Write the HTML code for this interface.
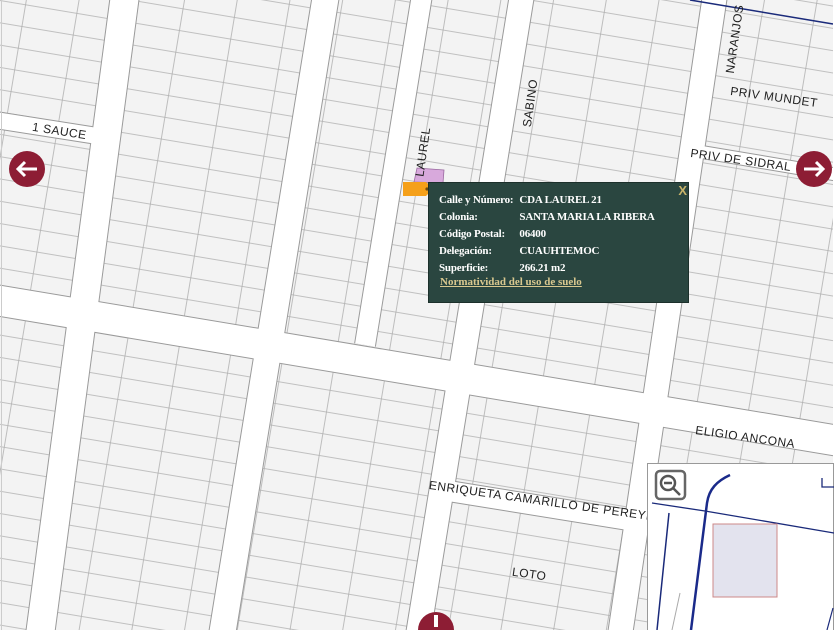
<!DOCTYPE html>
<html><head><meta charset="utf-8"><style>
body{margin:0;width:840px;height:630px;overflow:hidden;background:#fff;font-family:"Liberation Sans",sans-serif;position:relative}
svg{position:absolute;left:0;top:0}
.pop{position:absolute;left:428px;top:182px;width:261px;height:121px;background:#2a4640;border:1px solid #1c302b;box-sizing:border-box;font-family:"Liberation Serif",serif;font-weight:bold;font-size:11px;color:#fff}
.pop table{position:absolute;left:10px;top:10px;border-collapse:collapse}
.pop td{padding:0 6px 3px 0;height:14px;white-space:nowrap;letter-spacing:-0.2px}
.pop a{position:absolute;left:11px;top:93px;color:#d9c88f;text-decoration:underline;white-space:nowrap}
.pop .x{position:absolute;right:1px;top:0px;color:#c8b46a;font-family:"Liberation Sans",sans-serif;font-size:13px}
.lbl{position:absolute;font-size:12px;color:#222;white-space:nowrap;letter-spacing:0.5px}
</style></head><body>
<svg width="840" height="630" viewBox="0 0 840 630">
<defs>
<pattern id="lots" width="52" height="22" patternUnits="userSpaceOnUse" patternTransform="rotate(9.5)">
<rect width="52" height="22" fill="#f3f3f3"/>
<path d="M0 0.5H52M26 0V22" stroke="#b0b0b0" stroke-width="0.8"/>
</pattern>
</defs>
<rect width="840" height="630" fill="url(#lots)"/>
<g stroke="#9a9a9a" fill="none" stroke-linecap="butt">
<path d="M125 -5L40 635" stroke-width="30"/>
<path d="M326 -5L222 635" stroke-width="28"/>
<path d="M422 -5L365 345" stroke-width="22"/>
<path d="M522 -5L418 635" stroke-width="26"/>
<path d="M715 -5L620 635" stroke-width="26"/>
<path d="M-5 300L845 442" stroke-width="32"/>
<path d="M430 488L845 555" stroke-width="22"/>
<path d="M-5 120L110 138" stroke-width="18"/>
<path d="M690 150L845 176" stroke-width="14"/>
</g>
<g stroke="#fff" fill="none">
<path d="M125 -5L40 635" stroke-width="28"/>
<path d="M326 -5L222 635" stroke-width="26"/>
<path d="M422 -5L365 345" stroke-width="20"/>
<path d="M522 -5L418 635" stroke-width="24"/>
<path d="M715 -5L620 635" stroke-width="24"/>
<path d="M-5 300L845 442" stroke-width="30"/>
<path d="M430 488L845 555" stroke-width="20"/>
<path d="M-5 120L110 138" stroke-width="16"/>
<path d="M690 150L845 176" stroke-width="12"/>
</g>
<path d="M690 0L833 24" stroke="#1a2a7a" stroke-width="1.5"/>
<rect x="833" y="0" width="7" height="630" fill="#fff"/>
<rect x="1" y="0" width="1" height="630" fill="#ccc"/>
<polygon points="417,168 444,170 443,183 414,182" fill="#d8a9dc" stroke="#9a6aa0" stroke-width="0.8"/>
<polygon points="403,182 426,182 433,189 426,196 403,196" fill="#f5a01a"/>
<circle cx="427" cy="189" r="1.6" fill="#6b4a10"/>
<circle cx="27" cy="169" r="18" fill="#8d1d34"/>
<path d="M18 169H37M25 162L18 169L25 176" stroke="#fff" stroke-width="3" fill="none"/>
<circle cx="814" cy="169" r="18" fill="#8d1d34"/>
<path d="M804 169H823M816 162L823 169L816 176" stroke="#fff" stroke-width="3" fill="none"/>
<circle cx="436" cy="630" r="18" fill="#8d1d34"/>
<rect x="434" y="615" width="4" height="12" fill="#fff"/>
</svg>
<div class="lbl" style="left:32px;top:124px;transform:rotate(9deg)">1 SAUCE</div>
<div class="lbl" style="left:398px;top:145px;transform:rotate(-82deg)">LAUREL</div>
<div class="lbl" style="left:506px;top:96px;transform:rotate(-82deg)">SABINO</div>
<div class="lbl" style="left:700px;top:32px;transform:rotate(-82deg)">NARANJOS</div>
<div class="lbl" style="left:730px;top:90px;transform:rotate(8deg)">PRIV MUNDET</div>
<div class="lbl" style="left:690px;top:153px;transform:rotate(8deg)">PRIV DE SIDRAL</div>
<div class="lbl" style="left:695px;top:430px;transform:rotate(8deg)">ELIGIO ANCONA</div>
<div class="lbl" style="left:430px;top:478px;transform:rotate(8deg);transform-origin:0 0">ENRIQUETA CAMARILLO DE PEREYRA</div>
<div class="lbl" style="left:512px;top:567px;transform:rotate(8deg)">LOTO</div>
<div class="pop">
<span class="x">X</span>
<table>
<tr><td>Calle y Número:</td><td>CDA LAUREL 21</td></tr>
<tr><td>Colonia:</td><td>SANTA MARIA LA RIBERA</td></tr>
<tr><td>Código Postal:</td><td>06400</td></tr>
<tr><td>Delegación:</td><td>CUAUHTEMOC</td></tr>
<tr><td>Superficie:</td><td>266.21 m2</td></tr>
</table>
<a>Normatividad del uso de suelo</a>
</div>
<svg style="left:647px;top:463px" width="187" height="167" viewBox="0 0 187 167">
<rect x="0.5" y="0.5" width="186" height="170" fill="#fff" stroke="#999"/>
<path d="M83 12C70 18 62 26 60 40L44 167" stroke="#1a2a8a" stroke-width="2.5" fill="none"/>
<path d="M5 40L58 48L187 70" stroke="#1a2a7a" stroke-width="1.3" fill="none"/>
<path d="M22 50L10 167" stroke="#1a2a7a" stroke-width="1.5" fill="none"/>
<path d="M175 15V24H187" stroke="#1a2a7a" stroke-width="1.3" fill="none"/>
<path d="M33 130L25 167" stroke="#aaa" stroke-width="1" fill="none"/>
<path d="M186 145L180 167" stroke="#1a2a7a" stroke-width="1.2" fill="none"/>
<rect x="66" y="61" width="64" height="73" fill="#e3e3ee" stroke="#c88" stroke-width="1"/>
<rect x="9" y="8" width="29" height="28" rx="4" fill="#fff" stroke="#666" stroke-width="2.5"/>
<circle cx="21" cy="20" r="7" fill="none" stroke="#555" stroke-width="2.5"/>
<path d="M17 20H25M26 25L33 32" stroke="#555" stroke-width="2.5"/>
</svg>
</body></html>
